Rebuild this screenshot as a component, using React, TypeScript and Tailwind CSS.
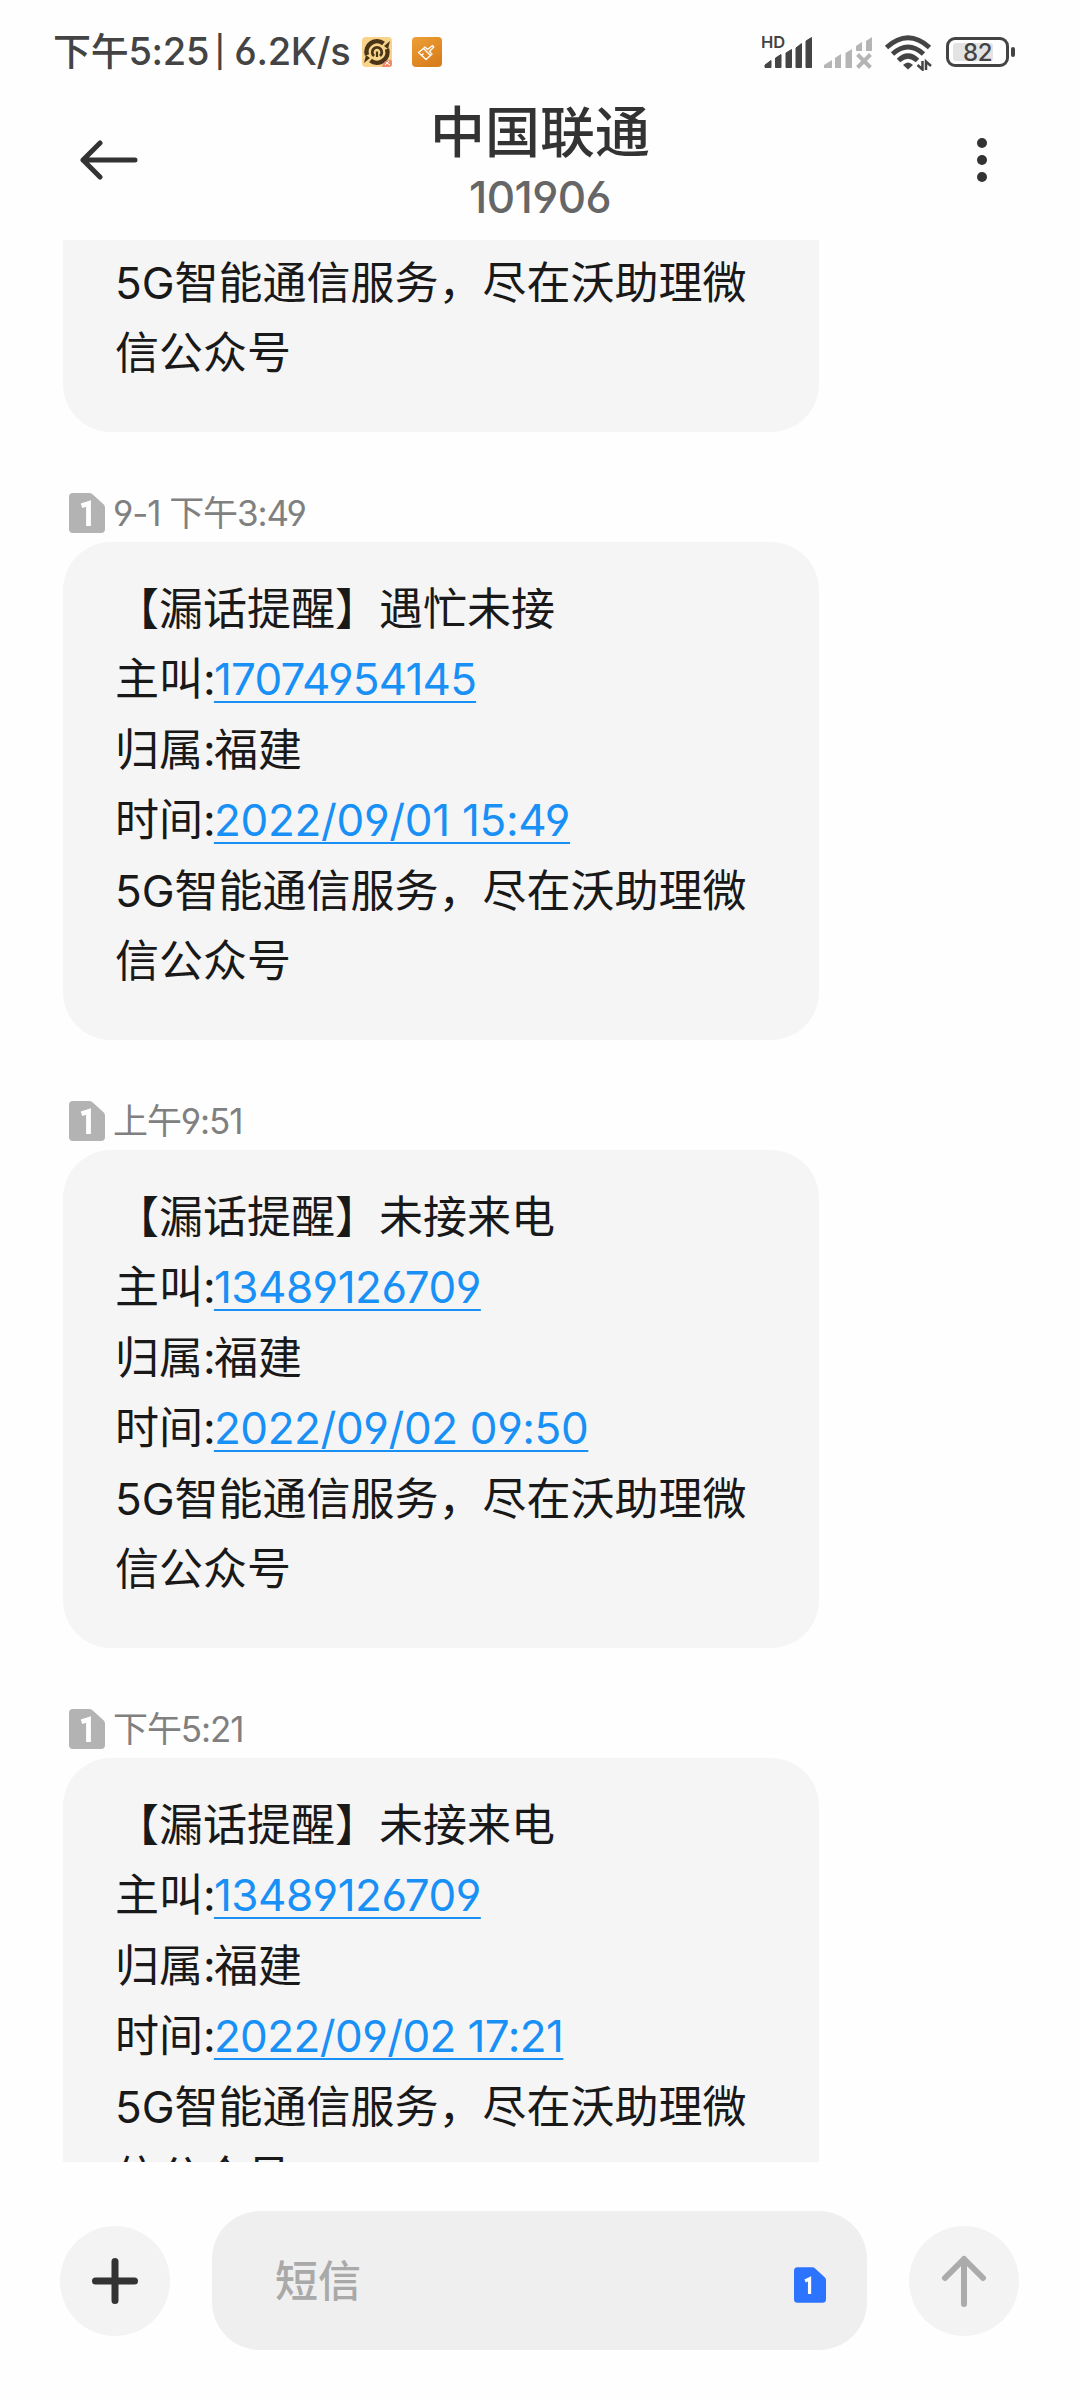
import React from "react";

type Line = { text: string; link?: string; tracking?: string };
type Message = { time: string; lines: Line[] };

const FOOTER = "5G智能通信服务，尽在沃助理微信公众号";

const messages: Message[] = [
  {
    time: "9-1 下午3:49",
    lines: [
      { text: "【漏话提醒】遇忙未接" },
      { text: "主叫:", link: "17074954145", tracking: "tracking-[-0.8px]" },
      { text: "归属:福建" },
      { text: "时间:", link: "2022/09/01 15:49", tracking: "tracking-[-0.3px]" },
    ],
  },
  {
    time: "上午9:51",
    lines: [
      { text: "【漏话提醒】未接来电" },
      { text: "主叫:", link: "13489126709", tracking: "tracking-[-0.5px]" },
      { text: "归属:福建" },
      { text: "时间:", link: "2022/09/02 09:50", tracking: "tracking-[-0.4px]" },
    ],
  },
  {
    time: "下午5:21",
    lines: [
      { text: "【漏话提醒】未接来电" },
      { text: "主叫:", link: "13489126709", tracking: "tracking-[-0.5px]" },
      { text: "归属:福建" },
      { text: "时间:", link: "2022/09/02 17:21", tracking: "tracking-[-0.6px]" },
    ],
  },
];

function SimBadge({ className, fill, small }: { className: string; fill: string; small?: boolean }) {
  return (
    <svg className={className} viewBox="0 0 36 40">
      <path d="M4 0H20.500Q22.500 0 23.800 1.500L34.800 11.500Q36 12.800 36 14.500V36Q36 40 32 40H4Q0 40 0 36V4Q0 0 4 0Z" fill={fill} />
      <path
        d={small ? "M12.500 15.500L17.500 13V30" : "M12.500 12.800L19.500 10.500V33"}
        fill="none"
        stroke="#fff"
        strokeWidth={small ? 3.6 : 4.8}
      />
    </svg>
  );
}

function StatusBar() {
  return (
    <div className="flex h-[100px] shrink-0 items-start pl-[53px] pr-[65px] text-[#444]">
      <div className="mt-[25px] flex h-[54px] items-center whitespace-pre text-[38px] font-medium leading-[54px]">
        <span className="w-[309px] tracking-[-0.3px] [word-spacing:-2.500px]">
          下午5:25 <span className="relative -left-[2px] -top-[2px] text-[31px]">|</span> 6.2K/s
        </span>
      </div>
      <svg className="mt-[37px] h-[30px] w-[30px]" viewBox="0 0 30 30">
        <rect width="30" height="30" rx="4" fill="#f7d48a" />
        <g fill="none" stroke="#4a3518">
          <path d="M5 18A10.500 10.500 0 0 1 21.500 6.500M25 12A10.500 10.500 0 0 1 8.500 23.500" strokeWidth="4.500" />
          <path d="M12 19A4.800 4.800 0 1 1 18 19" strokeWidth="2.800" />
          <path d="M15 14.500V20" strokeWidth="2.200" />
        </g>
        <path d="M22 9L28 4L26 12ZM8 21L2 26L4 18Z" fill="#4a3518" />
        <path d="M20 30Q21 23 29 22.500L30 25V27Q30 30 27 30Z" fill="#f08a66" />
        <path d="M23 28L27 24M24 25.500L28 28" stroke="#fff" strokeWidth="1" />
      </svg>
      <svg className="ml-5 mt-[37px] h-[30px] w-[30px]" viewBox="0 0 30 30">
        <defs>
          <linearGradient id="brushBg" x1="0" y1="0" x2="0.600" y2="1">
            <stop offset="0" stopColor="#eda036" />
            <stop offset="1" stopColor="#d97e1c" />
          </linearGradient>
        </defs>
        <rect width="30" height="30" rx="4" fill="url(#brushBg)" />
        <path d="M6.500 15.500L11.500 11.500L18.500 18.500L14 22.500ZM9.500 18.500L11.500 16.500M11.500 11.500L13 10L15.500 12.500L20.500 8.500L21.800 10L17.500 14.500L20 17L18.500 18.500" fill="none" stroke="#fff" strokeWidth="1.300" strokeLinejoin="round" />
      </svg>
      <div className="flex-1" />
      <svg className="mt-[33px] h-[38px] w-[253px]" viewBox="762 33 253 38" fill="#444">
        <text x="761" y="48" fontSize="16.500" fontWeight="600" fontFamily="Inter, sans-serif">HD</text>
        <g stroke="#444" strokeWidth="1" strokeLinejoin="round">
          <path d="M765 67.500V65L771 60.500V67.500ZM775.500 67.500V58L781 54.500V67.500ZM786 67.500V53L791.500 49.500V67.500ZM796 67.500V48L801.500 43.500V67.500ZM806 67.500V41L811.500 37.500V67.500Z" />
        </g>
        <g fill="#b5b5b5">
          <path d="M824 68V65L832 60V68ZM835 68V58L841 54V68ZM845.500 68V53L852 49V68ZM856 51V46L862 42V51ZM866 51V41L872 37V51Z" />
          <path d="M857.500 54.500L870.500 67.500M870.500 54.500L857.500 67.500" stroke="#b5b5b5" strokeWidth="4" />
        </g>
        <g fill="none" stroke="#444" strokeWidth="5">
          <path d="M886.500 47.500Q908 28 929.500 47.500" />
          <path d="M892.500 54Q908 40 923.500 54" />
          <path d="M898.500 60.500Q908 51.500 917.500 60.500" />
        </g>
        <path d="M903 65Q908 60 913 65L908 69.500Z" />
        <path d="M922.500 61V69.500L917.500 65M926 70V61.500L931 66" fill="none" stroke="#444" strokeWidth="2.500" />
        <rect x="947.500" y="38.500" width="60" height="27" rx="7.500" fill="none" stroke="#444" strokeWidth="3" />
        <rect x="953" y="43" width="40" height="18" rx="3" fill="#e3e3e3" />
        <rect x="1011" y="47" width="4" height="10" rx="2" />
        <text x="977.500" y="61" fontSize="24" fontWeight="500" letterSpacing="-0.500" textAnchor="middle" fontFamily="Inter, sans-serif">82</text>
      </svg>
    </div>
  );
}

function Header() {
  return (
    <header className="flex h-[140px] shrink-0 items-start justify-between px-[80px]">
      <svg className="mt-[40px] h-[40px] w-[58px]" viewBox="0 0 58 40" fill="none" stroke="#333" strokeWidth="5" strokeLinecap="round" strokeLinejoin="round">
        <path d="M20 3L3 20L20 37M3 20H55" />
      </svg>
      <div className="-mt-px flex flex-col items-center">
        <h1 className="h-[66px] text-[55px] font-medium leading-[66px] text-[#333]">中国联通</h1>
        <p className="mt-[2px] h-[60px] text-[44px] font-medium leading-[60px] tracking-[-0.6px] text-[#666]">101906</p>
      </div>
      <svg className="mt-[37px] h-[46px] w-[58px]" viewBox="0 0 58 46" fill="#333">
        <circle cx="40" cy="6" r="5" />
        <circle cx="40" cy="23" r="5" />
        <circle cx="40" cy="40" r="5" />
      </svg>
    </header>
  );
}

function Bubble({ children }: { children: React.ReactNode }) {
  return (
    <div className="h-[498px] w-[756px] rounded-[48px] bg-[#f5f5f5] pl-[52px] pr-[54px] pt-[32px] text-[44px] leading-[70.4px] text-[#191919]">
      {children}
    </div>
  );
}

function Label({ text }: { text: string }) {
  const [head, tail] = text.split(":");
  if (tail === undefined) return <>{text}</>;
  return (
    <>
      {head}
      <span className="tracking-[-1.8px]">:</span>
      {tail}
    </>
  );
}

function MessageItem({ message }: { message: Message }) {
  return (
    <article className="flex h-[608px] shrink-0 flex-col">
      <div className="mb-[2px] mt-[54px] flex h-[54px] items-center pl-[6px]">
        <SimBadge className="h-[40px] w-[36px]" fill="#b3b3b3" />
        <span className="ml-[8px] text-[35px] leading-[54px] tracking-[-1.1px] text-[#808080]">{message.time}</span>
      </div>
      <Bubble>
        {message.lines.map((l) => (
          <p key={l.text} className="whitespace-pre">
            <Label text={l.text} />
            {l.link && (
              <a className={`text-[#1890f5] underline decoration-[2px] underline-offset-[6px] [text-decoration-skip-ink:none] ${l.tracking}`}>
                {l.link}
              </a>
            )}
          </p>
        ))}
        <p>{FOOTER}</p>
      </Bubble>
    </article>
  );
}

function Composer() {
  return (
    <div className="flex h-[238px] shrink-0 items-start pl-[60px] pt-[49px]">
      <button className="mt-[15px] flex size-[110px] items-center justify-center rounded-full bg-[#f3f3f3]">
        <svg className="size-[48px]" viewBox="0 0 48 48" stroke="#333" strokeWidth="7" strokeLinecap="round">
          <path d="M24 4.500V43.500M4.500 24H43.500" />
        </svg>
      </button>
      <div className="ml-[42px] flex h-[139px] w-[655px] items-center justify-between rounded-[48px] bg-[#efefef] pl-[63px] pr-[41px]">
        <span className="text-[43px] font-medium leading-[60px] text-[#a9a9a9]">短信</span>
        <SimBadge className="mt-[8px] h-[36px] w-[32px]" fill="#2c74ff" small />
      </div>
      <button className="ml-[42px] mt-[15px] flex size-[110px] items-center justify-center rounded-full bg-[#f3f3f3]">
        <svg className="size-[54px]" viewBox="0 0 54 54" fill="none" stroke="#ababab" strokeWidth="6" strokeLinecap="round" strokeLinejoin="round">
          <path d="M27 50V5M8 24L27 5L46 24" />
        </svg>
      </button>
    </div>
  );
}

export default function App() {
  return (
    <div className="flex h-[2400px] w-[1080px] flex-col overflow-hidden bg-[#fefefe] font-['Inter','Noto_Sans_CJK_SC',sans-serif] [font-feature-settings:'cv03','cv04']">
      <StatusBar />
      <Header />
      <main className="flex h-[1922px] shrink-0 flex-col overflow-hidden pl-[63px]">
        <div className="flex h-[192px] shrink-0 flex-col justify-end overflow-hidden">
          <div className="h-[498px] shrink-0">
            <Bubble>
              <div className="h-[281.6px]" />
              <p>{FOOTER}</p>
            </Bubble>
          </div>
        </div>
        {messages.map((m) => (
          <MessageItem key={m.time} message={m} />
        ))}
      </main>
      <Composer />
    </div>
  );
}
